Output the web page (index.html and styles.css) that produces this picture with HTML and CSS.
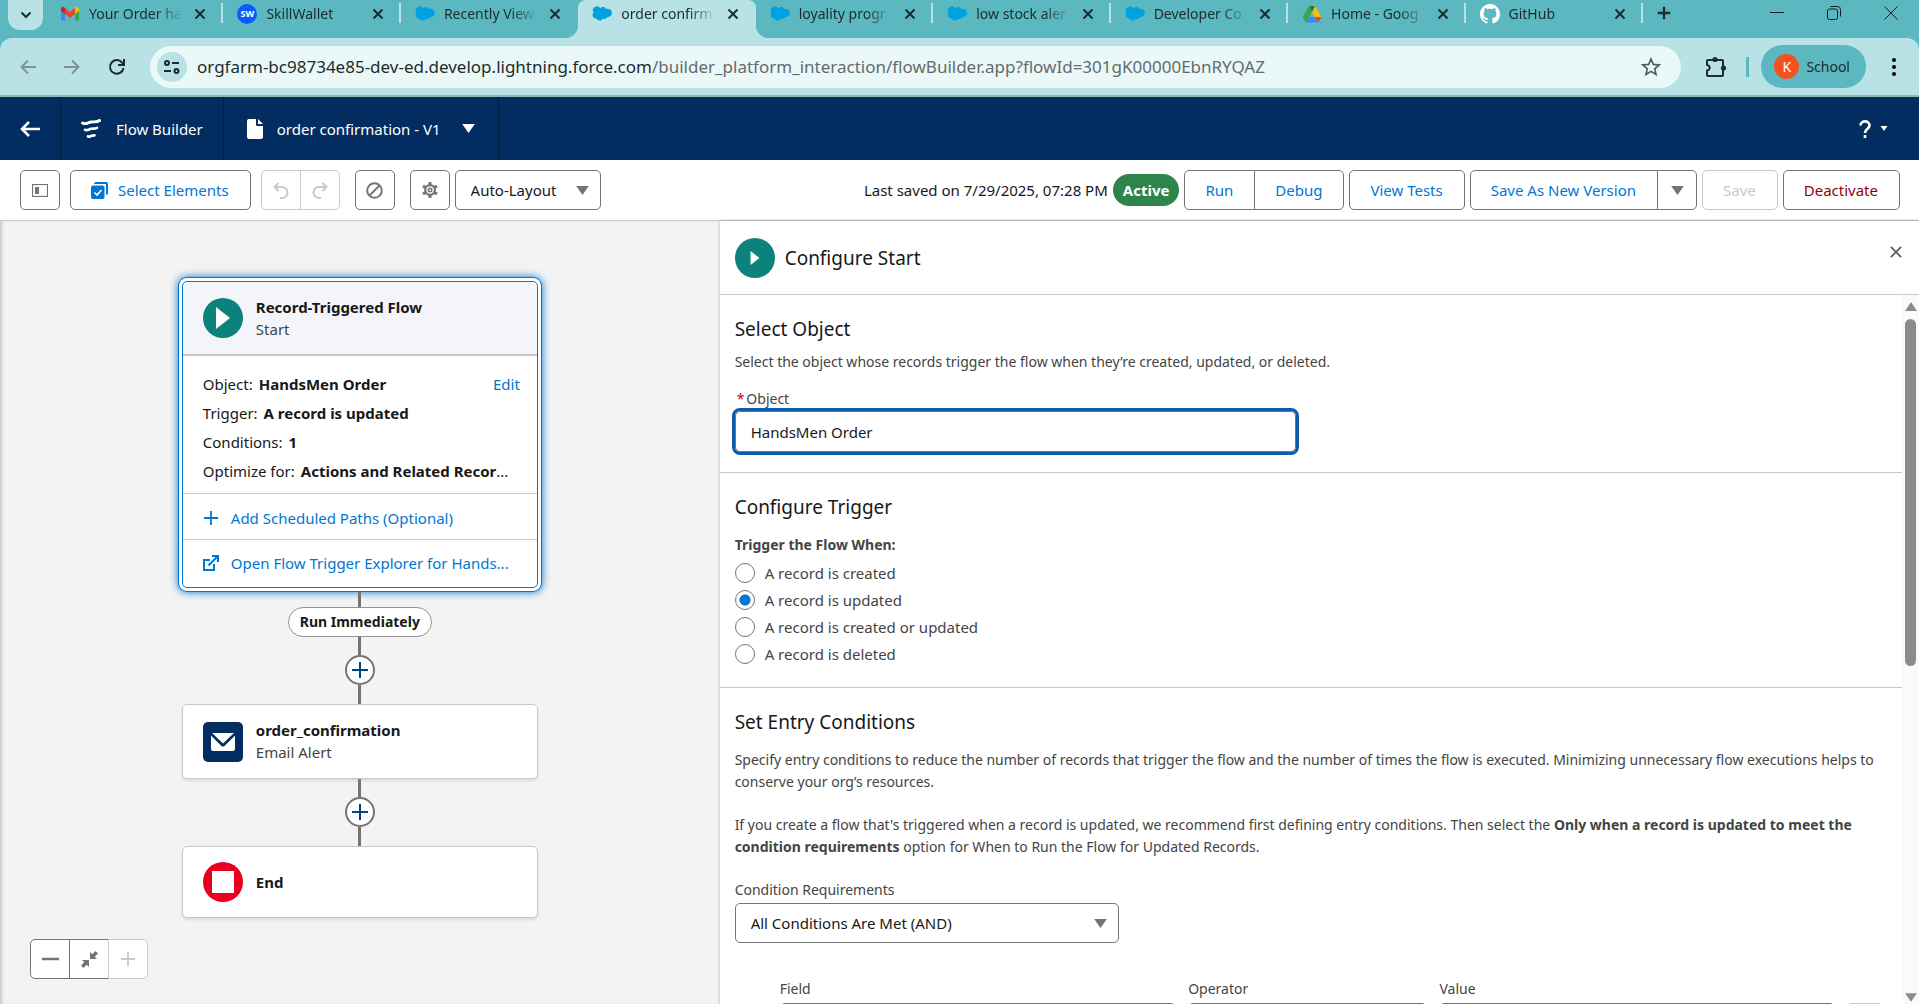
FILE: index.html
```html
<!DOCTYPE html>
<html lang="en">
<head>
<meta charset="utf-8">
<title>order confirmation - V1 | Flow Builder</title>
<link rel="stylesheet" href="styles.css">
</head>
<body>
<svg class="sprite" aria-hidden="true">
  <symbol id="close" viewBox="0 0 12 12"><path d="M1.500 1.500l9 9M10.500 1.500l-9 9" stroke="currentColor" stroke-width="2" fill="none"/></symbol>
  <symbol id="cloud" viewBox="0 0 20 16"><path d="M8.300 2.200A3.700 3.700 0 0 1 14.200 2.900A4.300 4.300 0 1 1 14.900 11.200A3.200 3.200 0 0 1 10.800 12.700A3.700 3.700 0 0 1 4.200 12.400A3.400 3.400 0 0 1 1.600 6.600A4 4 0 0 1 8.300 2.200Z" fill="#00a1e0"/></symbol>
  <symbol id="down" viewBox="0 0 14 10"><path d="M0 0h14L7 10z" fill="currentColor"/></symbol>
  <symbol id="plus" viewBox="0 0 18 18"><path d="M9 1v16M1 9h16" stroke="currentColor" stroke-width="2" fill="none"/></symbol>
  <symbol id="play" viewBox="0 0 14 22"><path d="M0 0l14 11L0 22z" fill="#fff"/></symbol>
</svg>

<header class="browser">
  <div class="tabstrip">
    <button class="tab-search" aria-label="Search tabs"><svg width="12" height="8" viewBox="0 0 12 8"><path d="M1.500 1.500L6 6l4.500-4.500" stroke="currentColor" stroke-width="2" fill="none"/></svg></button>
    <nav class="tabs">
      <div class="tab">
        <svg width="20" height="16" viewBox="0 0 20 16"><path d="M1 3v11.500h4V6z" fill="#4285f4"/><path d="M19 3v11.500h-4V6z" fill="#34a853"/><path d="M15 2v6l4-3V2.500A2 2 0 0 0 16 1z" fill="#fbbc04"/><path d="M5 2v6L1 5V2.500A2 2 0 0 1 4 1z" fill="#c5221f"/><path d="M5 2l5 4 5-4v6l-5 4-5-4z" fill="#ea4335"/></svg>
        <a href="#" class="tab-title">Your Order ha</a><button aria-label="Close tab"><svg width="12" height="12"><use href="#close"/></svg></button>
      </div>
      <div class="tab">
        <span class="sw">SW</span>
        <a href="#" class="tab-title">SkillWallet</a><button aria-label="Close tab"><svg width="12" height="12"><use href="#close"/></svg></button>
      </div>
      <div class="tab last-before">
        <svg width="20" height="16"><use href="#cloud"/></svg>
        <a href="#" class="tab-title">Recently View</a><button aria-label="Close tab"><svg width="12" height="12"><use href="#close"/></svg></button>
      </div>
      <div class="tab active">
        <svg width="20" height="16"><use href="#cloud"/></svg>
        <a href="#" class="tab-title">order confirm</a><button aria-label="Close tab"><svg width="12" height="12"><use href="#close"/></svg></button>
      </div>
      <div class="tab">
        <svg width="20" height="16"><use href="#cloud"/></svg>
        <a href="#" class="tab-title">loyality progr</a><button aria-label="Close tab"><svg width="12" height="12"><use href="#close"/></svg></button>
      </div>
      <div class="tab">
        <svg width="20" height="16"><use href="#cloud"/></svg>
        <a href="#" class="tab-title">low stock aler</a><button aria-label="Close tab"><svg width="12" height="12"><use href="#close"/></svg></button>
      </div>
      <div class="tab">
        <svg width="20" height="16"><use href="#cloud"/></svg>
        <a href="#" class="tab-title">Developer Co</a><button aria-label="Close tab"><svg width="12" height="12"><use href="#close"/></svg></button>
      </div>
      <div class="tab">
        <svg width="20" height="18" viewBox="0 0 20 18"><path d="M7 1L.5 12 4 17.500 10 7z" fill="#34a853"/><path d="M7 1h6l6.500 11H13z" fill="#fbbc04"/><path d="M4 17.500L6.800 12h12.700L16 17.500z" fill="#4285f4"/><path d="M13.500 12h6L16 17.500z" fill="#ea4335"/><path d="M7 1h6l-3 6z" fill="#188038"/></svg>
        <a href="#" class="tab-title">Home - Goog</a><button aria-label="Close tab"><svg width="12" height="12"><use href="#close"/></svg></button>
      </div>
      <div class="tab">
        <svg width="20" height="20" viewBox="0 0 16 16"><path fill="#fff" d="M8 0C3.580 0 0 3.580 0 8c0 3.540 2.290 6.530 5.470 7.590.4.070.55-.17.55-.38 0-.19-.01-.82-.01-1.490-2.010.37-2.530-.49-2.690-.94-.09-.23-.48-.94-.82-1.130-.28-.15-.68-.52-.01-.53.63-.01 1.080.58 1.230.82.72 1.210 1.870.87 2.330.66.070-.52.280-.87.510-1.070-1.780-.2-3.640-.89-3.640-3.950 0-.87.31-1.590.82-2.150-.08-.2-.36-1.020.08-2.120 0 0 .67-.21 2.200.82.640-.18 1.320-.27 2-.27s1.360.09 2 .27c1.530-1.040 2.200-.82 2.200-.82.44 1.100.16 1.920.08 2.120.51.56.82 1.270.82 2.150 0 3.070-1.870 3.750-3.650 3.950.29.25.54.73.54 1.480 0 1.070-.01 1.930-.01 2.200 0 .21.15.46.55.38A8.010 8.010 0 0 0 16 8c0-4.420-3.580-8-8-8z"/></svg>
        <a href="#" class="tab-title">GitHub</a><button aria-label="Close tab"><svg width="12" height="12"><use href="#close"/></svg></button>
      </div>
    </nav>
    <button class="new-tab" aria-label="New tab"><svg width="14" height="14" viewBox="0 0 18 18"><path d="M9 1v16M1 9h16" stroke="currentColor" stroke-width="3"/></svg></button>
    <div class="window-controls">
      <button aria-label="Minimize"><svg width="14" height="14" viewBox="0 0 14 14"><path d="M0 6.500h14" stroke="currentColor"/></svg></button>
      <button aria-label="Restore"><svg width="14" height="14" viewBox="0 0 14 14" fill="none" stroke="currentColor"><rect x=".5" y="3" width="10" height="10.500" rx="2"/><path d="M3.500 .500h7a3 3 0 0 1 3 3v7"/></svg></button>
      <button aria-label="Close"><svg width="14" height="14" viewBox="0 0 14 14"><path d="M.5.5l13 13M13.500.500l-13 13" stroke="currentColor"/></svg></button>
    </div>
  </div>
  <div class="navbar">
    <div class="nav-start">
      <button class="dim" aria-label="Back"><svg width="16" height="16" viewBox="0 0 16 16" fill="none" stroke="currentColor" stroke-width="2"><path d="M16 8H2M8 1.500L1.500 8 8 14.500"/></svg></button>
      <button class="dim" aria-label="Forward"><svg width="16" height="16" viewBox="0 0 16 16" fill="none" stroke="currentColor" stroke-width="2"><path d="M0 8h14M8 1.500L14.500 8 8 14.500"/></svg></button>
      <button aria-label="Reload"><svg width="18" height="18" viewBox="0 0 18 18" fill="none" stroke="currentColor" stroke-width="2"><path d="M15.500 10A6.800 6.800 0 1 1 14 4.500L15.500 6M16 1v6h-6"/></svg></button>
    </div>
    <div class="address">
      <button class="site-info" aria-label="Site information"><svg width="18" height="16" viewBox="0 0 18 16" fill="none" stroke="currentColor" stroke-width="2"><circle cx="4" cy="4" r="2"/><path d="M9 4h7M1 12h7"/><circle cx="13.500" cy="12" r="2"/></svg></button>
      <div class="url" role="textbox" aria-label="Address">orgfarm-bc98734e85-dev-ed.develop.lightning.force.com<span>/builder_platform_interaction/flowBuilder.app?flowId=301gK00000EbnRYQAZ</span></div>
      <button aria-label="Bookmark"><svg width="20" height="20" viewBox="0 0 20 20"><path d="M10 2l2.300 5.400 5.900.5-4.500 3.900 1.400 5.700L10 14.400l-5.100 3.100 1.400-5.700-4.500-3.900 5.900-.5z" fill="none" stroke="#4f5b5d" stroke-width="1.600"/></svg></button>
    </div>
    <div class="nav-end">
      <button aria-label="Extensions"><svg width="22" height="22" viewBox="0 0 22 22"><path d="M3 4h14a1 1 0 0 1 1 1v14a1 1 0 0 1-1 1H3a1 1 0 0 1-1-1v-4.500c3.500-.5 3.500-5 0-5.500V5a1 1 0 0 1 1-1z" fill="none" stroke="currentColor" stroke-width="2"/><circle cx="10" cy="3.500" r="2.600" fill="currentColor"/><circle cx="18.500" cy="12" r="2.600" fill="currentColor"/></svg></button>
      <span class="nav-sep"></span>
      <button class="profile"><span>K</span>School</button>
      <button aria-label="Menu"><svg width="6" height="18" viewBox="0 0 6 18"><circle cx="3" cy="2" r="2"/><circle cx="3" cy="9" r="2"/><circle cx="3" cy="16" r="2"/></svg></button>
    </div>
  </div>
</header>

<header class="builder">
  <button class="b-back" aria-label="Back"><svg width="20" height="16" viewBox="0 0 20 16" fill="none" stroke="currentColor" stroke-width="2.600"><path d="M20 8H3M9 1L2 8l7 7"/></svg></button>
  <div class="b-app"><svg width="20" height="20" viewBox="0 0 20 20" fill="none" stroke="currentColor" stroke-linecap="round"><path d="M1.500 4C5 6 7 3.500 10 3s6 .5 8.500-1.500" stroke-width="2.900"/><path d="M4 10.800c2.500 1.200 4-.6 6-1s4 .3 6-1" stroke-width="2.700"/><path d="M7 17.500c1.500.6 2.500-.5 3.500-.7s2 0 3-.5" stroke-width="2.700"/></svg>Flow Builder</div>
  <button class="b-doc"><svg width="16" height="20" viewBox="0 0 16 20" fill="currentColor"><path d="M2 0h7v5.500a1.500 1.500 0 0 0 1.500 1.500H16v11a2 2 0 0 1-2 2H2a2 2 0 0 1-2-2V2a2 2 0 0 1 2-2z"/><path d="M11 0l5 5h-5z"/></svg>order confirmation - V1<svg class="caret" width="13" height="9"><use href="#down"/></svg></button>
  <button class="b-help" aria-label="Help"><svg width="12" height="18" viewBox="0 0 12 18" fill="none" stroke="currentColor" stroke-width="2.600"><path d="M1.500 5.500C1.500 0 10.500 0 10.500 5.500 10.500 9 6 8.500 6 13M6 15v3"/></svg><svg width="8" height="5"><use href="#down"/></svg></button>
</header>

<div class="toolbar">
  <div class="tools">
    <button class="btn icon" aria-label="Toggle toolbox"><svg width="16" height="13" viewBox="0 0 16 13"><rect x=".5" y=".5" width="15" height="12" fill="none" stroke="currentColor" stroke-width="1.200"/><path d="M3 3h4v7H3z" fill="currentColor"/></svg></button>
    <button class="btn select-el"><svg width="17" height="17" viewBox="0 0 17 17"><path d="M5 0h10a2 2 0 0 1 2 2v9a2 2 0 0 1-2 2V2H3a2 2 0 0 1 2-2z" fill="currentColor"/><rect y="3.500" width="13.500" height="13.500" rx="2" fill="currentColor"/><path d="M3.500 10.500l2.500 2.500 4.500-5" stroke="#fff" stroke-width="1.700" fill="none"/></svg>Select Elements</button>
    <div class="group">
      <button class="btn icon off" disabled aria-label="Undo"><svg width="16" height="17" viewBox="0 0 16 17" fill="none" stroke="currentColor" stroke-width="2"><path d="M5.500 1L1.500 5l4 4M2 5h7a5 5 0 0 1 0 11H7"/></svg></button><button class="btn icon off" disabled aria-label="Redo"><svg width="16" height="17" viewBox="0 0 16 17" fill="none" stroke="currentColor" stroke-width="2"><path d="M10.500 1l4 4-4 4M14 5H7a5 5 0 0 0 0 11h2"/></svg></button>
    </div>
  </div>
  <button class="btn icon" aria-label="Disabled elements"><svg width="17" height="17" viewBox="0 0 17 17" fill="none" stroke="currentColor" stroke-width="2"><circle cx="8.500" cy="8.500" r="7.300"/><path d="M13.500 3.500l-10 10"/></svg></button>
  <div class="tool-pair">
    <button class="btn icon" aria-label="Settings"><svg width="16" height="16" viewBox="0 0 16 16" fill="none" stroke="currentColor"><circle cx="8" cy="8" r="4.800" stroke-width="2.200"/><circle cx="8" cy="8" r="1.700" stroke-width="1.600"/><path d="M8 0v3M8 13v3M1 4l2.500 1.500M12.500 10.500L15 12M1 12l2.500-1.500M12.500 5.500L15 4" stroke-width="3"/></svg></button>
    <div class="picker layout"><select aria-label="Layout"><option>Auto-Layout</option></select><svg width="13" height="9"><use href="#down"/></svg></div>
  </div>
  <div class="actions">
    <span>Last saved on 7/29/2025, 07:28 PM</span>
    <span class="badge">Active</span>
    <div class="group"><button class="btn">Run</button><button class="btn">Debug</button></div>
    <button class="btn">View Tests</button>
    <div class="group"><button class="btn">Save As New Version</button><button class="btn icon" aria-label="More save options"><svg width="13" height="9"><use href="#down"/></svg></button></div>
    <button class="btn off" disabled>Save</button>
    <button class="btn danger">Deactivate</button>
  </div>
</div>

<main class="work">
  <section class="canvas">
    <div class="flow">
      <article class="node start">
        <div class="node-head"><span class="round"><svg width="14" height="22"><use href="#play"/></svg></span><div><h3>Record-Triggered Flow</h3><p>Start</p></div></div>
        <div class="facts">
          <p>Object: <b>HandsMen Order</b><a href="#">Edit</a></p>
          <p>Trigger: <b>A record is updated</b></p>
          <p>Conditions: <b>1</b></p>
          <p>Optimize for: <span><b>Actions and Related Recor</b>...</span></p>
        </div>
        <a href="#" class="node-link"><svg width="16" height="16"><use href="#plus"/></svg>Add Scheduled Paths (Optional)</a>
        <a href="#" class="node-link"><svg width="16" height="16" viewBox="0 0 16 16" fill="none" stroke="currentColor" stroke-width="2"><path d="M7 5H1v10h10V9M5.500 10.500L14 2M9 1h6v6"/></svg>Open Flow Trigger Explorer for Hands...</a>
      </article>
      <span class="line first"></span>
      <span class="pill">Run Immediately</span>
      <span class="line"></span>
      <button class="add" aria-label="Add element"><svg width="18" height="18"><use href="#plus"/></svg></button>
      <span class="line"></span>
      <article class="node"><div class="node-head"><span class="round mail"><svg width="24" height="18" viewBox="0 0 24 18" fill="#fff"><path d="M1 0h22l-11 10.500z"/><path d="M0 2.500l10.500 10.500q1.500 1.200 3 0L24 2.500V16a2 2 0 0 1-2 2H2a2 2 0 0 1-2-2z"/></svg></span><div><h3>order_confirmation</h3><p>Email Alert</p></div></div></article>
      <span class="line"></span>
      <button class="add" aria-label="Add element"><svg width="18" height="18"><use href="#plus"/></svg></button>
      <span class="line"></span>
      <article class="node end"><div class="node-head"><span class="round stop"><i></i></span><h3>End</h3></div></article>
    </div>
    <div class="group zoom">
      <button class="btn icon" aria-label="Zoom out"><svg width="17" height="16" viewBox="0 0 17 16"><path d="M0 8h17" stroke="currentColor" stroke-width="2.500"/></svg></button><button class="btn icon" aria-label="Fit to view"><svg width="17" height="17" viewBox="0 0 17 17" fill="currentColor"><path d="M9 1v7h7l-2.300-2.300L17 2.500 14.500 0l-3.200 3.300z"/><path d="M8 16V9H1l2.300 2.300L0 14.500 2.500 17l3.200-3.300z"/></svg></button><button class="btn icon off" disabled aria-label="Zoom in"><svg width="16" height="16"><use href="#plus"/></svg></button>
    </div>
  </section>

  <section class="panel">
    <header class="panel-head"><span class="round"><svg width="10" height="14"><use href="#play"/></svg></span><h2>Configure Start</h2><button aria-label="Close panel"><svg width="14" height="14" viewBox="0 0 14 14"><path d="M1 1l12 12M13 1L1 13" stroke="#5c5c5c" stroke-width="2"/></svg></button></header>
    <div class="panel-main">
      <form class="sections">
        <section>
          <h2>Select Object</h2>
          <p>Select the object whose records trigger the flow when they’re created, updated, or deleted.</p>
          <label class="req" for="object"><span>*</span>Object</label>
          <input id="object" class="object" type="text" value="HandsMen Order">
        </section>
        <section class="trigger">
          <h2>Configure Trigger</h2>
          <fieldset>
            <legend>Trigger the Flow When:</legend>
            <label><input type="radio" name="when">A record is created</label>
            <label><input type="radio" name="when" checked>A record is updated</label>
            <label><input type="radio" name="when">A record is created or updated</label>
            <label><input type="radio" name="when">A record is deleted</label>
          </fieldset>
        </section>
        <section class="entry">
          <h2>Set Entry Conditions</h2>
          <p>Specify entry conditions to reduce the number of records that trigger the flow and the number of times the flow is executed. Minimizing unnecessary flow executions helps to conserve your org’s resources.</p>
          <p>If you create a flow that's triggered when a record is updated, we recommend first defining entry conditions. Then select the <b>Only when a record is updated to meet the condition requirements</b> option for When to Run the Flow for Updated Records.</p>
          <label for="req">Condition Requirements</label>
          <div class="picker"><select id="req"><option>All Conditions Are Met (AND)</option></select><svg width="13" height="9"><use href="#down"/></svg></div>
          <div class="condition">
            <label>Field<input type="text"></label>
            <label>Operator<input type="text"></label>
            <label>Value<input type="text"></label>
            <button class="btn icon off" type="button" disabled aria-label="Delete condition"></button>
          </div>
        </section>
      </form>
      <div class="scroll" aria-hidden="true"><svg width="12" height="9" viewBox="0 0 12 9"><path d="M6 0l6 9H0z" fill="#8b8b8b"/></svg><span></span><svg width="12" height="9"><use href="#down"/></svg></div>
    </div>
  </section>
</main>
</body>
</html>
```
FILE: styles.css
```css
* { box-sizing: border-box; margin: 0; padding: 0; }
body {
  height: 100vh;
  overflow: hidden;
  display: flex;
  flex-direction: column;
  font: 15px/20px "Noto Sans", sans-serif;
  color: #181818;
  background: #fff;
}
button, input, select { font: inherit; color: inherit; }
button { background: none; border: 0; display: flex; align-items: center; justify-content: center; }
svg { flex: none; display: block; }
a { color: #0176d3; text-decoration: none; }
h2 { font-size: 19px; line-height: 24px; font-weight: 400; }
h3 { font-size: 15px; line-height: 20px; font-weight: 700; }
.sprite { position: absolute; width: 0; height: 0; }

/* Browser chrome */
.browser { flex: none; background: #5bb8c1; border-bottom: 2px solid #93b5b8; color: #1c2b2d; }
.tabstrip { display: flex; height: 38px; align-items: flex-start; padding-left: 8px; }
.tab-search { width: 35px; height: 30px; background: #b8e2e5; border-radius: 0 0 12px 12px; }
.tabs { display: flex; flex: 0 1 1597px; min-width: 0; margin-left: 3px; }
.tab { position: relative; flex: 1 1 0; min-width: 0; height: 38px; display: flex; align-items: center; gap: 9px; padding: 0 17px 10px 14px; }
.tab > svg { width: 20px; }
.tab::after { content: ""; position: absolute; right: 0; top: 3px; width: 2px; height: 20px; background: #b8e2e5; }
.tab-title { flex: 1; min-width: 0; overflow: hidden; white-space: nowrap; font-size: 14px; color: inherit; -webkit-mask-image: linear-gradient(90deg, #000 70%, transparent 98%); mask-image: linear-gradient(90deg, #000 70%, transparent 98%); }
.tab.active { background: #b8e2e5; border-radius: 8px 8px 0 0; }
.tab.active::after, .tab.last-before::after { display: none; }
.tab.active::before { content: ""; position: absolute; inset: auto -14px 0; height: 14px; background: radial-gradient(circle at 0 0, transparent 14px, #b8e2e5 15px) left / 14px 14px no-repeat, radial-gradient(circle at 100% 0, transparent 14px, #b8e2e5 15px) right / 14px 14px no-repeat; }
.sw { width: 20px; height: 20px; border-radius: 50%; background: #0b5cff; color: #fff; font-size: 9px; font-weight: 700; text-align: center; }
.new-tab { width: 42px; height: 26px; }
.window-controls { margin-left: auto; display: flex; }
.window-controls button { width: 57px; height: 26px; color: #102022; }
.navbar { height: 57px; display: flex; align-items: center; background: #b8e2e5; border-radius: 12px 12px 0 0; padding: 0 22px 0 20px; }
.nav-start { display: flex; gap: 28px; margin-right: 24px; }
.nav-start .dim { color: #7b9496; }
.address { flex: 1; min-width: 0; height: 42px; display: flex; align-items: center; background: #ebf8f8; border-radius: 21px; padding: 0 20px 0 7px; }
.site-info { width: 30px; height: 30px; border-radius: 50%; background: #b8e2e5; }
.url { flex: 1; margin-left: 10px; font-size: 17px; line-height: 24px; white-space: nowrap; overflow: hidden; }
.url span { color: #646b6c; }
.nav-end { display: flex; align-items: center; margin-left: 24px; }
.nav-sep { width: 3px; height: 20px; background: #5bb8c1; margin: 0 12px 0 19px; }
.profile { height: 43px; gap: 7px; padding: 0 16px 0 13px; margin-right: 25px; border-radius: 22px; background: #5bb8c1; font-size: 14px; }
.profile span { width: 25px; height: 25px; line-height: 25px; border-radius: 50%; background: #f4511e; color: #fff; }

/* Builder header */
.builder { flex: none; display: flex; height: 63px; background: #032d60; color: #fff; }
.builder > * { display: flex; align-items: center; }
.b-back { width: 61px; border-right: 1px solid #021d42; }
.b-app { gap: 15px; padding: 0 20px; border-right: 1px solid #021d42; }
.b-doc { gap: 14px; padding: 0 23px; border-right: 1px solid #021d42; }
.caret { margin-left: 7px; }
.builder .b-help { margin-left: auto; padding-right: 31px; gap: 9px; }

/* Toolbar */
.toolbar { flex: none; display: flex; align-items: center; gap: 15px; height: 61px; padding: 0 19px 0 20px; border-bottom: 1px solid #c9c9c9; }
.tools { display: flex; gap: 10px; }
.btn { height: 40px; padding: 0 21px 0 20px; border: 1px solid #747474; border-radius: 5px; background: #fff; color: #0176d3; white-space: nowrap; }
.btn.icon { width: 40px; padding: 0; color: #747474; }
.btn.off { border-color: #c9c9c9; color: #c9c9c9; }
.btn.danger { color: #8e030f; }
.select-el { gap: 10px; }
.group { display: flex; }
.group .btn + .btn { margin-left: -1px; border-radius: 0; }
.group .btn:first-child { border-radius: 5px 0 0 5px; }
.group .btn:last-child { border-radius: 0 5px 5px 0; }
.tool-pair { display: flex; gap: 5px; }
.picker { display: grid; align-items: center; height: 40px; }
.picker > * { grid-area: 1 / 1; }
.picker select { appearance: none; width: 100%; height: 40px; padding: 0 15px; border: 1px solid #747474; border-radius: 5px; background: #fff; }
.picker svg { justify-self: end; margin-right: 12px; color: #747474; pointer-events: none; }
.layout { width: 146px; }
.actions { margin-left: auto; display: flex; align-items: center; gap: 5px; white-space: nowrap; }
.badge { padding: 6px 10px; border-radius: 16px; background: #2e844a; color: #fff; font-weight: 700; }

/* Workspace */
.work { flex: 1; min-height: 0; display: grid; grid-template-columns: 3fr 5fr; }
.canvas { position: relative; background: #f3f3f3; box-shadow: inset 3px 0 3px -1px #c9c9c9; overflow: hidden; }
.flow { display: flex; flex-direction: column; align-items: center; padding-top: 60px; }
.node { width: 356px; border: 1px solid #c9c9c9; border-radius: 5px; background: #fff; box-shadow: 0 2px 3px #0000001a; }
.node-head { display: flex; align-items: center; gap: 13px; padding: 0 20px; height: 73px; }
.node-head p { color: #444; line-height: 24px; }
.round { flex: none; width: 40px; height: 40px; border-radius: 50%; background: #0b827c; display: grid; place-items: center; }
.mail { border-radius: 5px; background: #032d60; }
.stop { background: #ea001e; }
.stop i { width: 22px; height: 22px; background: #fff; }
.start { border-color: #0176d3; box-shadow: 0 0 0 3px #fff, 0 0 0 4px #0176d3, 0 0 8px 4px #0176d3; padding-bottom: 4px; }
.start .node-head { height: 74px; background: #f3f5fa; border-bottom: 2px solid #c9c9c9; border-radius: 5px 5px 0 0; }
.start h3 { padding-top: 2px; }
.facts { padding: 14px 17px 7px 20px; border-bottom: 1px solid #c9c9c9; }
.facts p { display: flex; gap: 6px; line-height: 29px; white-space: nowrap; }
.facts b + a { margin-left: auto; }
.node-link { display: flex; align-items: center; gap: 12px; height: 45px; padding: 3px 20px 0; white-space: nowrap; }
.node-link + .node-link { height: 44px; padding-top: 2px; border-top: 1px solid #c9c9c9; }
.line { width: 3px; height: 18px; background: #747474; }
.add + .line { height: 19px; }
.line.first { margin-top: 4px; height: 15px; }
.pill { height: 30px; padding: 0 11px; line-height: 28px; border: 1px solid #939393; border-radius: 15px; background: #fff; font-weight: 700; font-size: 14px; }
.add { width: 30px; height: 30px; border: 2px solid #747474; border-radius: 50%; background: #fff; color: #014486; }
.end .node-head { height: 70px; }
.zoom { position: absolute; left: 30px; bottom: 25px; }

/* Properties panel */
.panel { min-width: 0; min-height: 0; display: flex; flex-direction: column; background: #fff; box-shadow: 0 0 3px #0000004d; position: relative; }
.panel-head { flex: none; height: 74px; display: flex; align-items: center; gap: 10px; padding: 0 17px 0 15px; border-bottom: 1px solid #c9c9c9; }
.panel-head button { margin: 0 0 12px auto; }
.panel-head svg { width: 12px; }
.panel-main { flex: 1; min-height: 0; display: flex; overflow: hidden; }
.sections { flex: 1; min-width: 0; color: #444; font-size: 14px; line-height: 22px; }
.sections > section { padding: 22px 15px 20px; border-bottom: 1px solid #c9c9c9; }
.sections h2 { color: #181818; margin-bottom: 10px; }
.sections p { margin-bottom: 15px; }
.req { display: block; padding-left: 2px; }
.req span { color: #ba0517; margin-right: 2px; }
.sections .object { display: block; width: 561px; max-width: 100%; height: 41px; margin: 1px 0 0; padding: 0 15px; border: 1px solid #747474; border-radius: 5px; outline: 3px solid #0b5cab; font-size: 15px; color: #181818; }
.sections .trigger h2, .sections .entry h2 { margin-bottom: 15px; }
.trigger fieldset { border: 0; }
.trigger legend { font-weight: 700; padding-bottom: 3px; }
.trigger label { display: flex; align-items: center; gap: 10px; height: 27px; font-size: 15px; }
.trigger input { appearance: none; width: 20px; height: 20px; border: 1px solid #747474; border-radius: 50%; background: #fff; }
.trigger input:checked { background: radial-gradient(circle, #0176d3 5px, transparent 6px); }
.sections .entry { border: 0; }
.entry p { margin-bottom: 21px; }
.entry .picker { width: 384px; max-width: 100%; font-size: 15px; color: #181818; margin: 2px 0 35px; }
.condition { display: grid; grid-template-columns: 396fr 239fr 395fr 36px; gap: 12px; padding: 0 4px 0 45px; align-items: end; }
.condition label { display: block; }
.condition input { display: block; width: 100%; height: 40px; margin-top: 3px; border: 1px solid #747474; border-radius: 5px; }
.condition .btn { width: 36px; }
.scroll { width: 17px; background: #fafafa; display: flex; flex-direction: column; align-items: center; justify-content: space-between; padding: 7px 0 2px; color: #8b8b8b; }
.scroll span { width: 11px; height: 347px; border-radius: 6px; background: #8b8b8b; margin: 8px 0 auto; }
```
